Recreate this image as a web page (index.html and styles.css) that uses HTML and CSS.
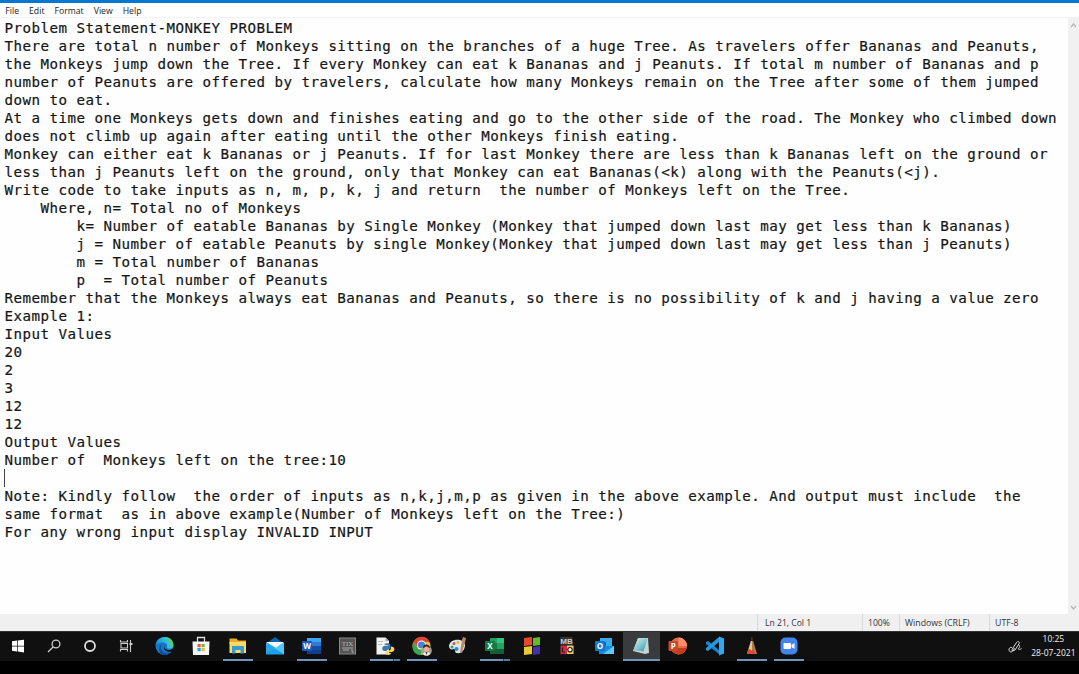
FILE: index.html
```
<!DOCTYPE html>
<html lang="en">
<head>
<meta charset="utf-8">
<title>Notepad</title>
<link rel="stylesheet" href="styles.css">
</head>
<body>
<div class="desktop">
<div class="titlebar"></div>
<nav class="menubar"><span>File</span><span>Edit</span><span class="format">Format</span><span class="view">View</span><span>Help</span></nav>
<main class="editor">
<pre class="text">Problem Statement-MONKEY PROBLEM
There are total n number of Monkeys sitting on the branches of a huge Tree. As travelers offer Bananas and Peanuts,
the Monkeys jump down the Tree. If every Monkey can eat k Bananas and j Peanuts. If total m number of Bananas and p
number of Peanuts are offered by travelers, calculate how many Monkeys remain on the Tree after some of them jumped
down to eat.
At a time one Monkeys gets down and finishes eating and go to the other side of the road. The Monkey who climbed down
does not climb up again after eating until the other Monkeys finish eating.
Monkey can either eat k Bananas or j Peanuts. If for last Monkey there are less than k Bananas left on the ground or
less than j Peanuts left on the ground, only that Monkey can eat Bananas(&lt;k) along with the Peanuts(&lt;j).
Write code to take inputs as n, m, p, k, j and return  the number of Monkeys left on the Tree.
    Where, n= Total no of Monkeys
        k= Number of eatable Bananas by Single Monkey (Monkey that jumped down last may get less than k Bananas)
        j = Number of eatable Peanuts by single Monkey(Monkey that jumped down last may get less than j Peanuts)
        m = Total number of Bananas
        p  = Total number of Peanuts
Remember that the Monkeys always eat Bananas and Peanuts, so there is no possibility of k and j having a value zero
Example 1:
Input Values
20
2
3
12
12
Output Values
Number of  Monkeys left on the tree:10
<span class="caret"></span>
Note: Kindly follow  the order of inputs as n,k,j,m,p as given in the above example. And output must include  the
same format  as in above example(Number of Monkeys left on the Tree:)
For any wrong input display INVALID INPUT</pre>
<div class="scrollbar">
<svg width="7" height="5" viewBox="0 0 7 5"><path d="M1 4 3.500 1 6 4"/></svg>
<svg width="7" height="5" viewBox="0 0 7 5"><path d="M1 1 3.500 4 6 1"/></svg>
</div>
</main>
<footer class="status"><span class="position">Ln 21, Col 1</span><span class="scale">100%</span><span class="endings">Windows (CRLF)</span><span class="encoding">UTF-8</span></footer>
<div class="taskbar">
<div class="system">
<div class="app"><svg viewBox="0 0 20 20"><path fill="#fff" d="M4 5.200 9 4.500V9.700H4zM9.700 4.400 16 3.700v6H9.700zM4 10.400h5v5.100l-5-.7zM9.700 10.400H16v6l-6.300-.8z"/></svg></div>
<div class="app"><svg viewBox="0 0 20 20" fill="none" stroke="#ccc" stroke-width="1.300"><circle cx="12" cy="8" r="3.900"/><path d="M9.300 10.800 4 16"/></svg></div>
<div class="app"><svg viewBox="0 0 20 20"><circle cx="10" cy="10" r="5" fill="none" stroke="#ddd" stroke-width="1.800"/></svg></div>
<div class="app"><svg viewBox="0 0 20 20" fill="none" stroke="#ccc" stroke-width="1.100"><path d="M4.500 4v2h7V4M4.500 15.500v-2h7v2M5 7.500h6.500v4.500H5zM14.500 4v12"/><path d="M13.500 8h3" stroke-width="2"/></svg></div>
</div>
<div class="apps">
<div class="app"><svg viewBox="0 0 20 20"><defs><linearGradient id="edge" x1="0" y1=".5" x2="1" y2=".2"><stop stop-color="#168bd7"/><stop offset=".55" stop-color="#31bfdc"/><stop offset="1" stop-color="#67d24d"/></linearGradient></defs><circle cx="9.500" cy="10" r="9" fill="#1478c8"/><path fill="url(#edge)" d="M.6 9C1.500-1 18-2 18.500 9c0 4-5 4.500-7 2.500 1.500-1.700.5-5-3-5C4 6.500 1 8 .6 9"/><path fill="#0d4d9c" d="M7 8c-4 6 3 11 8.500 8.500-2 2-5 3-7 2.400C3 17 3 10 7 8"/><path fill="#111" d="M10 9.500c-2 2 1 5 5 4.500l4-2-1.500 3.500C11 17 7 13 10 9.500"/></svg></div>
<div class="app"><svg viewBox="0 0 20 20"><path fill="none" stroke="#ddd" stroke-width="1.300" d="M5.500 6V1.500h7V6"/><path fill="#f7f7f7" d="M.5 5.500h17L17 19H1z"/><path fill="#e65a35" d="M5.500 8h3.200v3.200H5.500z"/><path fill="#7ab540" d="M9.500 8h3.200v3.200H9.500z"/><path fill="#279fd9" d="M5.500 12h3.200v3.200H5.500z"/><path fill="#f4b62c" d="M9.500 12h3.200v3.200H9.500z"/></svg></div>
<div class="app running"><svg viewBox="0 0 20 20"><path fill="#e5aa2e" d="M1.500 2.500h7l1.500 2h8V8H1.500z"/><path fill="#ffd966" d="M1.500 6h16.500v11H1.500z"/><path fill="#3b9bc9" d="M4 10h12v7.500h-3.500V14h-5v3.500H4z"/></svg></div>
<div class="app"><svg viewBox="0 0 20 20"><path fill="#0b66ad" d="m1 8 9-7 9 7v10H1z"/><path fill="#f7fbfd" d="M2 6h16v4l-8 4-8-4z"/><path fill="#28a8ea" d="m1 6 10 6-10 6.500z"/><path fill="#50c8f5" d="m19 6-10 7 10 5.500z"/><path fill="#1ba1e8" d="m1 18.500 9-6 9 6z"/></svg></div>
<div class="app running"><svg viewBox="0 0 20 20"><rect x="5" y="2" width="14" height="16" rx="1" fill="#2b7cd3"/><path fill="#41a5ee" d="M5 2h14v4H5z"/><path fill="#164fa0" d="M5 10h14v4H5z"/><path fill="#103f91" d="M5 14h14v4H5z"/><rect x="0" y="5" width="10" height="10" rx="1" fill="#185abd"/><text x="5" y="12.700" class="badge">W</text></svg></div>
<div class="app"><svg viewBox="0 0 20 20"><rect x="1.500" y="2" width="16" height="16" fill="#555" stroke="#888"/><text x="9.500" y="10" class="tiny">TIX</text><path d="M4 12h9M5 14h6M14 11v5h2" fill="none" stroke="#aaa"/></svg></div>
<div class="app running multi"><svg viewBox="0 0 20 20"><path fill="#f1f1f1" d="M1.500 1.500h9l3.500 3.500v13.500H1.500z"/><path fill="#aaa" d="m10.500 1.500 3.500 3.500h-3.500zM3 5h5v.7H3zM3 8h4v.7H3z"/><path fill="#3978ad" d="M9.500 9c0-2.500 6-2.500 6 0v3c0 2-4 1-4 3H9.500c-3 0-3-5 0-5h3.500v-.7H9.500z"/><path fill="#ffd84b" d="M16 10.500c4.500 0 4.500 5.500 0 5.500h-3v.8h3c0 3-5.500 3-5.500 0 0-3 5.500-1 5.500-4.500z"/></svg></div>
<div class="app running"><svg viewBox="0 0 20 20"><circle cx="9.500" cy="10" r="9" fill="#f2bd26"/><path fill="#df4438" d="M1.500 6C5-1 15-1 17.500 6h-8l-3.500 6z"/><path fill="#36a657" d="m1.500 6 4.500 7 4 1-1 5C1 19-1 11 1.500 6"/><circle cx="9.500" cy="9" r="4.500" fill="#fff"/><circle cx="9.500" cy="9" r="3.600" fill="#4285d9"/><circle cx="14.500" cy="14.500" r="5.300" fill="#aaa092"/><path fill="#382820" d="M11 12c0-5 7-4 7 0z"/><circle cx="14.500" cy="13" r="2.500" fill="#e8b594"/><path fill="#eee" d="M11 18c1-3 6-3 7 0-2 2-5 2-7 0"/><path fill="#333" d="m13.500 16 1 3 1-3z"/></svg></div>
<div class="app"><svg viewBox="0 0 20 20"><path fill="#dce7ef" d="M1 10c1-8 15-8 16-1 0 6-5 9-8 8-3 0-1-4-3-4-3 1-5 0-5-3"/><circle cx="4" cy="11" r="1.500" fill="#34a565"/><circle cx="6" cy="7.500" r="1.500" fill="#d95743"/><circle cx="10" cy="6.500" r="1.500" fill="#eabb35"/><circle cx="8.500" cy="13" r="2" fill="#288acb"/><path fill="#be8a5d" d="m12 16 2-12 1-3 3 1-1 4-3 11z"/></svg></div>
<div class="app running multi"><svg viewBox="0 0 20 20"><rect x="5" y="2" width="14" height="16" rx="1" fill="#21a366"/><path fill="#33c481" d="M12 2h7v5h-7z"/><path fill="#107c41" d="M5 7h7v6H5z"/><path fill="#185c37" d="M5 13h14v5H5z"/><rect x="0" y="5" width="10" height="10" rx="1" fill="#107c41"/><text x="5" y="12.700" class="badge">X</text></svg></div>
<div class="app"><svg viewBox="0 0 20 20"><path fill="#e5492d" d="m2 2 8-1v8l-8 1z"/><path fill="#67bb28" d="m11 2 7-1v8l-7 1z"/><path fill="#e9c936" d="m2 11 8-1v8l-8 1z"/><path fill="#4630ac" d="m11 11 7-1v8l-7 1z"/></svg></div>
<div class="app"><svg viewBox="0 0 20 20"><path fill="#333" d="M2.500 1h12v8h-12z"/><text x="8.500" y="8" class="tiny letters">MB</text><path fill="#d52a3f" d="M2.500 9.500H9V18H2.500z"/><path fill="#f4d456" d="M9 9.500h6.500V18H9z"/><path fill="none" stroke="#222" stroke-width="1.200" d="M4.500 11.500v4.500h2.500"/><circle cx="12" cy="13.700" r="2.200" fill="#fff" stroke="#222" stroke-width="1.200"/></svg></div>
<div class="app"><svg viewBox="0 0 20 20"><path fill="#39aaea" d="M5 2h12v10H5z"/><path fill="#0c60ad" d="M5 6h6v6H5z"/><path fill="#168ddb" d="M4 10h15v8H4z"/><path fill="#65c7f7" d="m8 18 11-8v8z"/><rect x="0" y="5" width="10" height="10" rx="1" fill="#0f78d4"/><text x="5" y="12.700" class="badge">O</text></svg></div>
<div class="app running active"><svg viewBox="0 0 20 20"><defs><linearGradient id="note" x2="1" y2="1"><stop stop-color="#d6f2f2"/><stop offset=".5" stop-color="#84c8cf"/><stop offset="1" stop-color="#328d9d"/></linearGradient></defs><path fill="#c8d3d1" d="m6 2 10 0 1 15-4 1L1 15z"/><path fill="url(#note)" d="M6 2.500h9.500l-4 13-10-1.500z"/></svg></div>
<div class="app"><svg viewBox="0 0 20 20"><circle cx="10.500" cy="10" r="8.500" fill="#e56b46"/><path fill="#ff8e68" d="M10.500 1.500A8.500 8.500 0 0 1 19 10h-8.500z"/><path fill="#c43e1c" d="M2.500 12h16c-2 8-13 9-16 0"/><rect x=".5" y="5" width="9.500" height="10" rx="1" fill="#c9472b"/><text x="5.200" y="12.700" class="badge">P</text></svg></div>
<div class="app"><svg viewBox="0 0 20 20"><path fill="#1685ce" d="m1 6 2-1 11 9v4L1 8z"/><path fill="#2298df" d="m1 14 2 1 11-9V1L1 12z"/><path fill="#36a7ee" d="m14 .5 5 2v15l-5 2z"/></svg></div>
<div class="app running"><svg viewBox="0 0 20 20"><path fill="#e7c391" d="M10 1 5 18h5z"/><path fill="#ad7950" d="m10 1 5 17h-5z"/><path fill="#272019" d="m10 0-1.200 5h2.500z"/><path fill="#df4933" d="m6 14 2-1 2 2 2-2 1 5H5z"/></svg></div>
<div class="app running"><svg viewBox="0 0 20 20"><rect x="1.500" y="1.500" width="17" height="17" rx="5" fill="#4285ed"/><rect x="4.500" y="7" width="7.500" height="6" rx="1" fill="#fff"/><path fill="#fff" d="m12.500 9 3-2v6l-3-2z"/></svg></div>
</div>
<svg class="pen" viewBox="0 0 14 14" fill="none" stroke="#ddd" stroke-width="1"><path d="M4 9.500 8.500 2.500C10 .5 12 2 11 3.800L7 10l-2.700 1zM4 7.500C1.500 6.500 0 10 1.800 11.500 4 13 5 10.500 6.500 8M10.500 5c2 .5 1 2.500 0 3.500s1 1.500 3 0"/></svg>
<div class="clock"><span class="time">10:25</span><span class="date">28-07-2021</span></div>
</div>
</div>
</body>
</html>
```
FILE: styles.css
```
* { box-sizing: border-box; }
body { margin: 0; background: #000; }
.desktop { width: 1079px; height: 674px; display: grid; grid-template-rows: 3px 15px 596px 17px 30px 13px; overflow: hidden; font-family: "Open Sans", "Noto Sans", sans-serif; }
.titlebar { background: #0877cf; }
.menubar { display: flex; gap: 10px; padding-left: 5.300px; background: #fff; border-bottom: 1px solid #f2f2f2; font-size: 8.7px; line-height: 16px; color: #222; }
.editor { display: flex; justify-content: space-between; background: #fefefe; }
.text { margin: 0; padding: 1px 0 0 4.500px; font: 14.200px/18px "DejaVu Sans Mono", monospace; letter-spacing: .455px; color: #161616; -webkit-text-stroke: .2px #161616; }
.caret { display: inline-block; width: 1px; height: 18px; margin-left: -.5px; background: #444; vertical-align: top; }
.scrollbar { width: 11px; display: flex; flex-direction: column; justify-content: space-between; align-items: center; padding: 5px 0 4px; background: #f1f1f1; }
.scrollbar svg { fill: none; stroke: #b5b5b5; stroke-width: 1.200; }
.status { display: grid; grid-template-columns: 105px 37px 90px 90px; justify-content: end; background: #f1f0f1; font-size: 8.750px; line-height: 18px; color: #333; white-space: nowrap; }
.status span { border-left: 1px solid #d9d9d9; padding-left: 5px; }
.status .position { padding-left: 7px; }
.status .position, .status .scale { font-size: 8.600px; }
.taskbar { display: flex; background: #101010; border-top: 1px solid #333; }
.system { display: grid; grid-template-columns: repeat(4, 36px); width: 146.500px; flex: none; }
.apps { display: grid; grid-template-columns: repeat(18, 36.700px); flex: none; }
.app { display: flex; justify-content: center; align-items: center; border-bottom: 2px solid transparent; height: 29px; }
.app svg { width: 20px; height: 20px; }
.running { border: 0; background: linear-gradient(#6f94bd, #6f94bd) center bottom / 30px 2px no-repeat; padding-bottom: 2px; }
.multi { background: linear-gradient(90deg, #6f94bd 23px, #334d6a 23px, #334d6a 24px, #557aa2 24px) center bottom / 30px 2px no-repeat; }
.active { background: linear-gradient(#6f94bd, #6f94bd) center bottom / 100% 2px no-repeat, #393b3d; }
.badge { font: bold 8px "Open Sans", sans-serif; fill: #fff; text-anchor: middle; }
.tiny { font: 7px "Liberation Serif", serif; fill: #bbb; text-anchor: middle; }
.letters { font: bold 8px "Liberation Sans", sans-serif; fill: #ccc; }
.pen { width: 14px; height: 14px; flex: none; margin: 8px 0 0 201.500px; }
.clock { flex: none; margin-left: 9px; width: 44px; display: flex; flex-direction: column; align-items: center; font-size: 8.500px; line-height: 13.500px; color: #eee; white-space: nowrap; }
```
